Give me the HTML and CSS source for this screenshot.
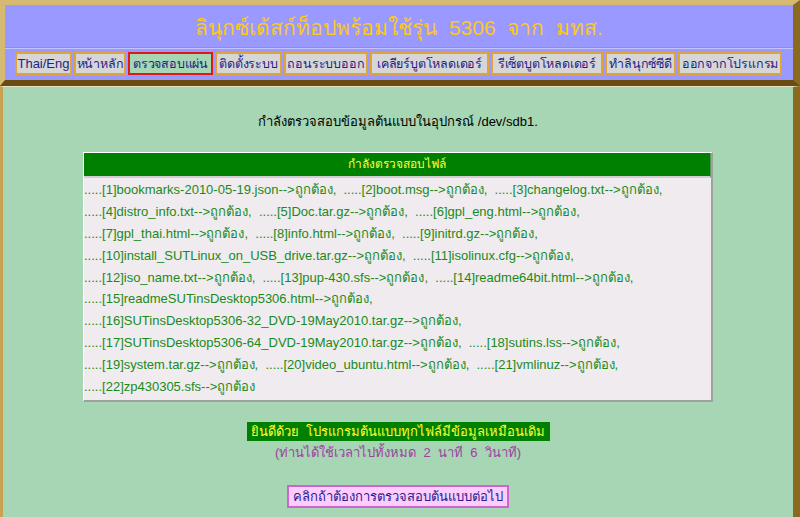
FILE: index.html
```html
<!DOCTYPE html>
<html lang="th">
<head>
<meta charset="utf-8">
<title>ตรวจสอบแผ่น</title>
<link rel="stylesheet" href="styles.css">
</head>
<body>
<div class="top">
  <h1 class="title">ลินุกซ์เด้สก์ท็อปพร้อมใช้รุ่น&nbsp; 5306&nbsp; จาก&nbsp; มทส.</h1>
  <div class="rule"></div>
  <nav class="menu">
    <span class="btn b-lang">Thai/Eng</span>
    <span class="btn b-home">หน้าหลัก</span>
    <span class="btn b-check active">ตรวจสอบแผ่น</span>
    <span class="btn b-install">ติดตั้งระบบ</span>
    <span class="btn b-remove">ถอนระบบออก</span>
    <span class="btn b-clear">เคลียร์บูตโหลดเดอร์</span>
    <span class="btn b-reset">รีเซ็ตบูตโหลดเดอร์</span>
    <span class="btn b-cd">ทำลินุกซ์ซีดี</span>
    <span class="btn b-exit">ออกจากโปรแกรม</span>
  </nav>
</div>
<div class="main">
  <p class="status">กำลังตรวจสอบข้อมูลต้นแบบในอุปกรณ์ /dev/sdb1.</p>
  <div class="panel">
    <div class="panel-head">กำลังตรวจสอบไฟล์</div>
    <div class="panel-body">
      <div class="line">.....[1]bookmarks-2010-05-19.json--&gt;ถูกต้อง, &nbsp;.....[2]boot.msg--&gt;ถูกต้อง, &nbsp;.....[3]changelog.txt--&gt;ถูกต้อง,</div>
      <div class="line">.....[4]distro_info.txt--&gt;ถูกต้อง, &nbsp;.....[5]Doc.tar.gz--&gt;ถูกต้อง, &nbsp;.....[6]gpl_eng.html--&gt;ถูกต้อง,</div>
      <div class="line">.....[7]gpl_thai.html--&gt;ถูกต้อง, &nbsp;.....[8]info.html--&gt;ถูกต้อง, &nbsp;.....[9]initrd.gz--&gt;ถูกต้อง,</div>
      <div class="line">.....[10]install_SUTLinux_on_USB_drive.tar.gz--&gt;ถูกต้อง, &nbsp;.....[11]isolinux.cfg--&gt;ถูกต้อง,</div>
      <div class="line">.....[12]iso_name.txt--&gt;ถูกต้อง, &nbsp;.....[13]pup-430.sfs--&gt;ถูกต้อง, &nbsp;.....[14]readme64bit.html--&gt;ถูกต้อง,</div>
      <div class="line">.....[15]readmeSUTinsDesktop5306.html--&gt;ถูกต้อง,</div>
      <div class="line">.....[16]SUTinsDesktop5306-32_DVD-19May2010.tar.gz--&gt;ถูกต้อง,</div>
      <div class="line">.....[17]SUTinsDesktop5306-64_DVD-19May2010.tar.gz--&gt;ถูกต้อง, &nbsp;.....[18]sutins.lss--&gt;ถูกต้อง,</div>
      <div class="line">.....[19]system.tar.gz--&gt;ถูกต้อง, &nbsp;.....[20]video_ubuntu.html--&gt;ถูกต้อง, &nbsp;.....[21]vmlinuz--&gt;ถูกต้อง,</div>
      <div class="line">.....[22]zp430305.sfs--&gt;ถูกต้อง</div>
    </div>
  </div>
  <div class="done-box">ยินดีด้วย&nbsp; โปรแกรมต้นแบบทุกไฟล์มีข้อมูลเหมือนเดิม</div>
  <p class="elapsed">(ท่านได้ใช้เวลาไปทั้งหมด&nbsp; 2&nbsp; นาที&nbsp; 6&nbsp; วินาที)</p>
  <div class="next-btn">คลิกถ้าต้องการตรวจสอบต้นแบบต่อไป</div>
</div>
</body>
</html>
```

FILE: styles.css
```css
html, body {
  margin: 0;
  padding: 0;
  height: 100%;
}
body {
  background: #7c5c18;
  font-family: "Liberation Sans", Arial, sans-serif;
  font-size: 13px;
  display: flex;
  flex-direction: column;
  overflow: hidden;
}
.top {
  background: #9999ff;
  border-style: solid;
  border-width: 5px 7px 6px 5px;
  border-color: #d6ba72 #8a6a1e #6a4c12 #d6ba72;
  height: 75px;
  box-sizing: content-box;
}
.title {
  margin: 0;
  padding-top: 10px;
  height: 32px;
  text-align: center;
  font-weight: normal;
  font-size: 21px;
  line-height: 26px;
  color: #fcc81c;
}
.rule {
  height: 1px;
  background: #c4c4ff;
  border-top: 1px solid #8c8cee;
  margin: 0 0 3px 0;
}
.menu {
  display: flex;
  gap: 2px;
  padding-left: 10px;
}
.btn {
  display: flex;
  align-items: center;
  justify-content: center;
  box-sizing: border-box;
  height: 23px;
  padding: 0;
  border: 2px solid #e0a23a;
  background: #d6d6d6;
  color: #1e1e8c;
  font-size: 12.5px;
  white-space: nowrap;
  letter-spacing: -0.2px;
}
.b-lang { width: 57px; letter-spacing: 0; font-size: 13px; }
.b-home { width: 52px; }
.b-check { width: 85px; }
.b-install { width: 67px; }
.b-remove { width: 84px; }
.b-clear { width: 119px; }
.b-reset { width: 112px; }
.b-cd { width: 71px; }
.b-exit { width: 104px; }
.btn.active {
  background: #a6d6b4;
  border-color: #e01818;
}
.main {
  flex: 1;
  background: #a6d6b4;
  border-style: solid;
  border-width: 1px 7px 0 3px;
  border-color: #e6e2c4 #8a6a1e #a6d6b4 #c8a250;
  text-align: center;
}
.status {
  margin: 27px 0 22px;
  color: #000;
  font-size: 13px;
  line-height: 16px;
}
.panel {
  width: 630px;
  margin: 0 auto;
  text-align: left;
  border-style: solid;
  border-width: 1px 2px 2px 1px;
  border-color: #ffffff #a0a0a0 #a0a0a0 #ffffff;
  box-sizing: border-box;
}
.panel-head {
  background: #008000;
  color: #ffff33;
  text-align: center;
  font-size: 12px;
  height: 23px;
  line-height: 23px;
  border-bottom: 2px solid #cfcfcf;
  border-right: 1px solid #5a9a5a;
}
.panel-body {
  background: #efebef;
  color: #1a8a1a;
  font-size: 13px;
  padding: 1px 0 2px 0;
}
.line {
  height: 21.9px;
  line-height: 22px;
  white-space: nowrap;
}
.done-box {
  width: 303px;
  height: 19px;
  line-height: 19px;
  margin: 20px auto 0;
  background: #008000;
  color: #ffff33;
  font-size: 13px;
  text-align: center;
}
.elapsed {
  margin: 4px 0 0;
  color: #a040a0;
  font-size: 13px;
  line-height: 16px;
}
.next-btn {
  box-sizing: border-box;
  width: 222px;
  height: 23px;
  line-height: 19px;
  margin: 24px auto 0;
  background: #ffccff;
  border: 2px solid #cc66cc;
  color: #1e1e8c;
  font-size: 13px;
}
```
